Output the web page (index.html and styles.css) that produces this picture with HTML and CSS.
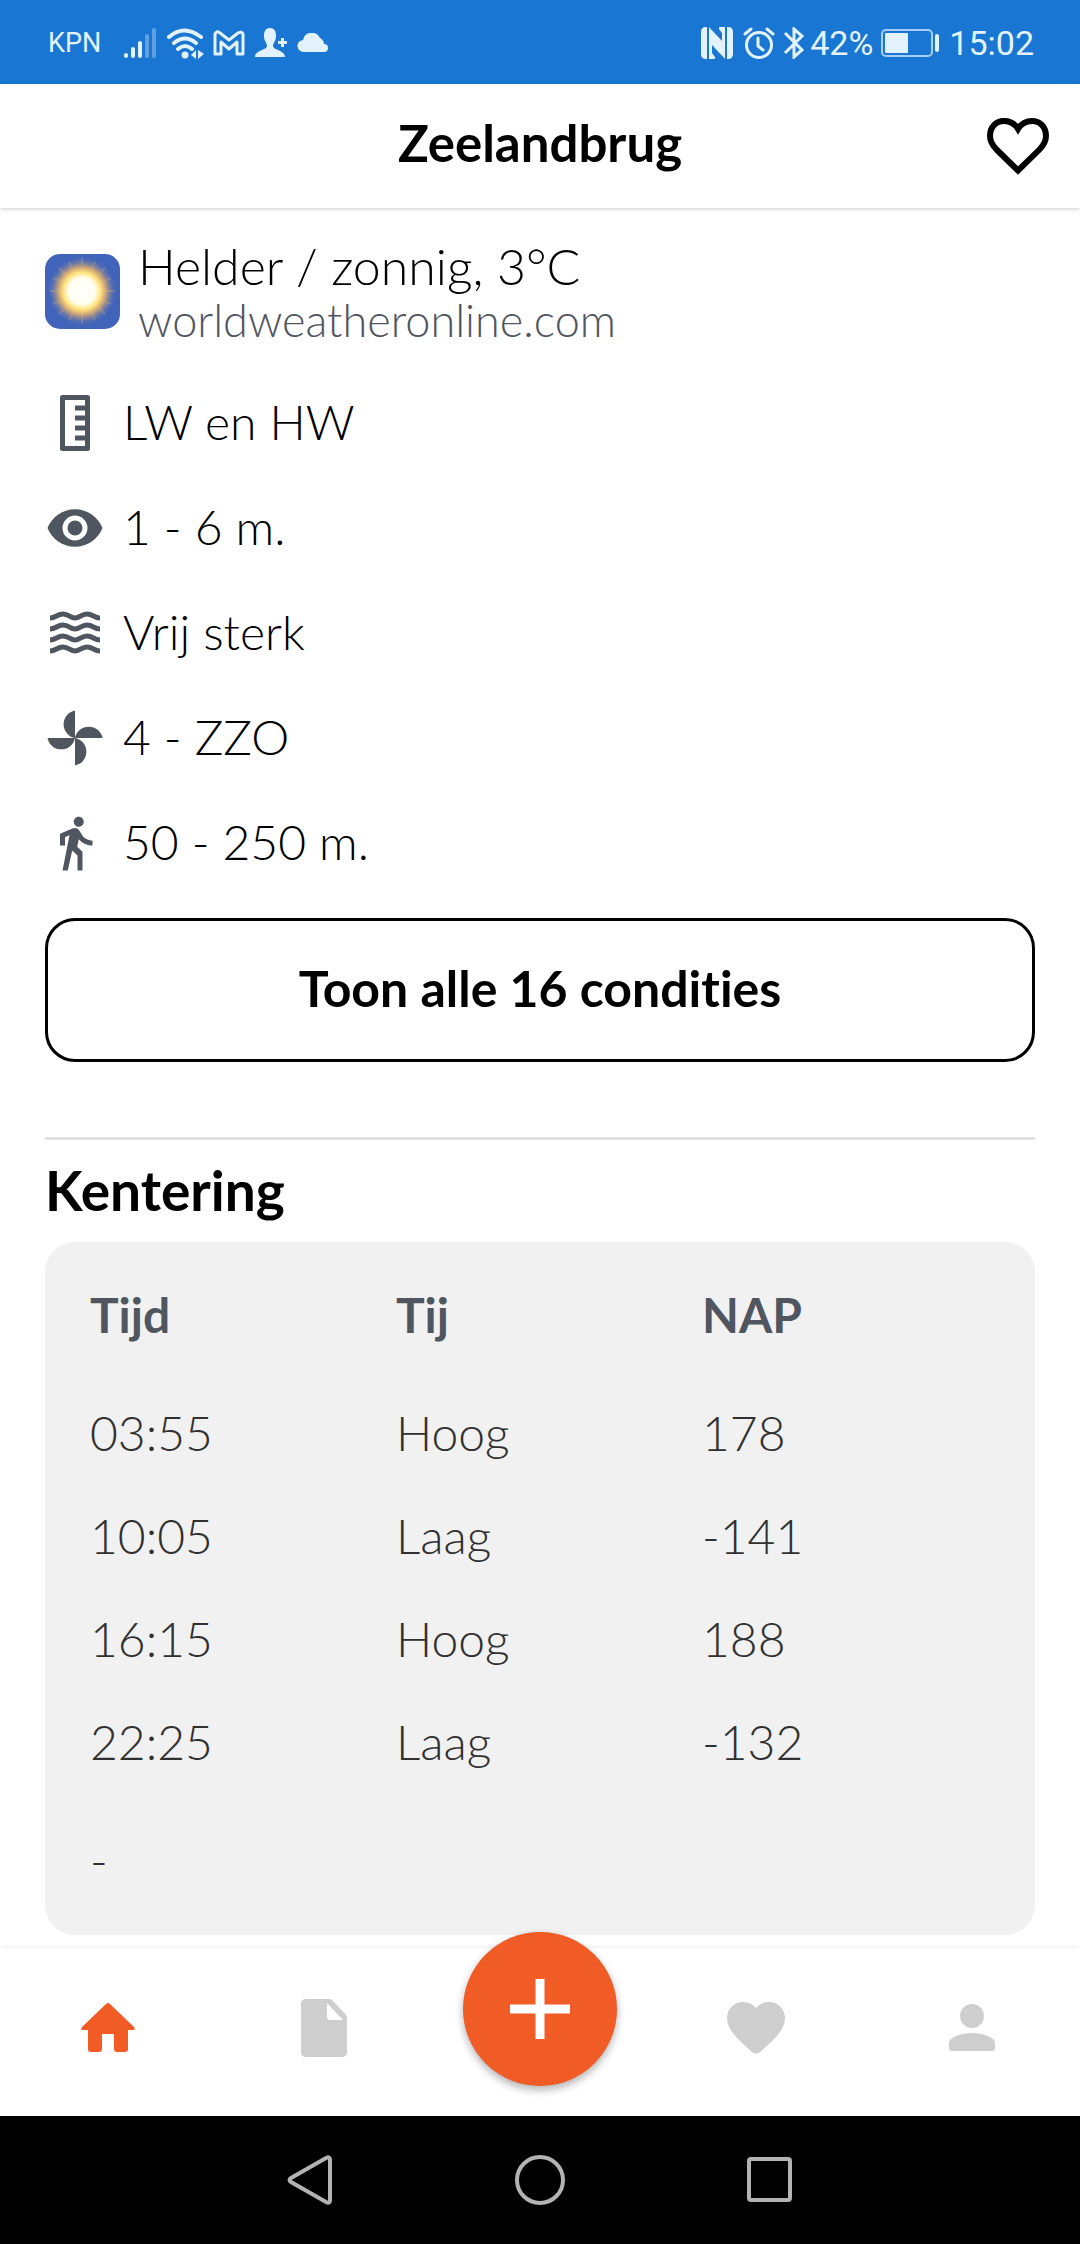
FILE: index.html
```html
<!DOCTYPE html>
<html lang="nl">
<head>
<meta charset="utf-8">
<meta name="viewport" content="width=device-width, initial-scale=1">
<title>Zeelandbrug</title>
<link rel="stylesheet" href="styles.css">
</head>
<body>
<div class="screen">
  <div class="status">
    <div class="status-left">
      <span class="carrier">KPN</span>
      <svg class="signal" width="34" height="32" viewBox="0 0 34 32"><g stroke="currentColor" stroke-width="4" stroke-linecap="round"><path d="M3 28v1M10 22v7M17 16v13"/><path opacity=".35" d="M24 9v20M31 3v26"/></g></svg>
      <svg class="wifi" width="38" height="32" viewBox="0 0 38 32"><g fill="none" stroke="currentColor" stroke-width="4" stroke-linecap="round"><path d="M3 10q15-13 32 0M8 16q11-9 22 0M12 22q7-6 14 0"/></g><circle cx="19" cy="28" r="3.500" fill="currentColor"/><path fill="currentColor" d="M30 23v9l-5-4zM32 23v9l6-5z"/></svg>
      <svg class="mail" width="32" height="26" viewBox="0 0 32 26"><path fill="none" stroke="currentColor" stroke-width="3" stroke-linejoin="round" d="M2 24V4q2-4 5-1l9 7 9-7q4-2 5 1v20h-6V12l-8 7-8-7v12z"/></svg>
      <svg class="contact" width="34" height="32" viewBox="0 0 34 32"><path fill="currentColor" d="M16 1c5 0 6 4 6 8 0 5-3 7-3 10 0 4 12 4 12 11H1c0-7 12-7 12-11 0-3-3-5-3-10 0-4 1-8 6-8zM27 11h3v3h3v3h-3v3h-3v-3h-3v-3h3z"/></svg>
      <svg class="cloud" width="32" height="20" viewBox="0 0 32 20"><path fill="currentColor" d="M7 19a6 6 0 0 1-1-12A9 9 0 0 1 23 5a7 7 0 0 1 4 6 4 4 0 0 1 0 8z"/></svg>
    </div>
    <div class="status-right">
      <svg class="nfc" width="32" height="32" viewBox="0 0 32 32"><path fill="currentColor" d="M5 0h1v32H5q-5 0-5-5V5q0-5 5-5zM27 32h-1V0h1q5 0 5 5v22q0 5-5 5zM8 0l13 14V6l-3-4V0h6v32L11 18v8l3 4v2H8z"/></svg>
      <svg class="alarm" width="32" height="32" viewBox="0 0 32 32"><g fill="none" stroke="currentColor" stroke-width="3" stroke-linecap="round"><circle cx="16" cy="18" r="12.500"/><path d="M15 11v8l5 4M2 7l6-5M30 7l-6-5"/></g></svg>
      <svg class="bluetooth" width="22" height="32" viewBox="0 0 22 32"><path fill="none" stroke="currentColor" stroke-width="3" d="M2 6l17 17-8 7V2l8 7L2 26"/></svg>
      <span class="clock">42%</span>
      <svg class="battery" width="60" height="28" viewBox="0 0 60 28"><rect x="1" y="1" width="50" height="26" rx="4" fill="none" stroke="currentColor" stroke-width="2" opacity=".7"/><rect x="4" y="4" width="23" height="20" rx="1" fill="currentColor"/><rect x="54" y="5" width="4" height="18" rx="2" fill="currentColor"/></svg>
      <span class="clock">15:02</span>
    </div>
  </div>

  <header class="topbar">
    <h1 class="topbar-title">Zeelandbrug</h1>
    <button class="favorite" type="button" aria-label="Favoriet">
      <svg width="64" height="60" viewBox="0 0 64 60"><path fill="none" stroke="currentColor" stroke-width="6" d="M32 54.500 11 34C6 29 4 25 4 20 4 11 10 5 18 5c6 0 11 3 14 8 3-5 8-8 14-8 8 0 14 6 14 15 0 5-2 9-7 14z"/></svg>
    </button>
  </header>

  <main class="content">
    <section class="weather">
      <svg class="weather-icon" width="75" height="75" viewBox="0 0 75 75" role="img" aria-label="Zonnig">
        <defs>
          <radialGradient id="sun"><stop offset="0" stop-color="#fff"/><stop offset=".38" stop-color="#fffef0"/><stop offset=".54" stop-color="#ffe27a"/><stop offset=".68" stop-color="#e5b06c" stop-opacity=".85"/><stop offset="1" stop-color="#4466b8" stop-opacity="0"/></radialGradient>
        </defs>
        <rect width="75" height="75" fill="#4064bb"/>
        <g stroke="#b9a58f" stroke-width="2" opacity=".45"><path d="M37 4v66M5 37h65M14 14l46 46M60 14L14 60M24 8l26 58M50 8L24 66M8 24l58 26M8 50l58-26"/></g>
        <circle cx="37" cy="37" r="35" fill="url(#sun)"/>
      </svg>
      <div>
        <p class="weather-text">Helder / zonnig, 3°C</p>
        <p class="weather-source">worldweatheronline.com</p>
      </div>
    </section>

    <ul class="conditions">
      <li class="condition">
        <svg class="icon" viewBox="0 0 60 60"><path fill="none" stroke="currentColor" stroke-width="5" stroke-linejoin="round" d="M17.500 4.500h25v51h-25z"/><path stroke="currentColor" stroke-width="5" d="M30 15h12M30 25h12M30 35h12M30 45h12"/></svg>
        <span class="condition-text">LW en HW</span>
      </li>
      <li class="condition">
        <svg class="icon" viewBox="0 0 24 24"><path fill="currentColor" d="M12 9a3 3 0 1 0 0 6 3 3 0 0 0 0-6m0 8a5 5 0 1 1 0-10 5 5 0 0 1 0 10m0-12.500C7 4.500 2.730 7.610 1 12c1.730 4.390 6 7.500 11 7.500s9.270-3.110 11-7.500c-1.730-4.390-6-7.500-11-7.500z"/></svg>
        <span class="condition-text">1 - 6 m.</span>
      </li>
      <li class="condition">
        <svg class="icon" viewBox="0 0 60 60"><g fill="none" stroke="currentColor" stroke-width="5"><path id="wave" d="M5 15c6 0 7-4 13-4s7 4 12 4 6-4 12-4 7 4 13 4"/><use href="#wave" y="11"/><use href="#wave" y="22"/><use href="#wave" y="33"/></g></svg>
        <span class="condition-text">Vrij sterk</span>
      </li>
      <li class="condition">
        <svg class="icon" viewBox="0 0 60 60"><path fill="currentColor" d="M30 30a14 14 0 0 1 0-27.500zM30 30a14 14 0 0 1 27.500 0zM30 30a14 14 0 0 1 0 27.500zM30 30a14 14 0 0 1-27.500 0z"/></svg>
        <span class="condition-text">4 - ZZO</span>
      </li>
      <li class="condition">
        <svg class="icon" viewBox="0 0 24 24"><path fill="currentColor" d="M13.500 5.500c1.100 0 2-.9 2-2s-.9-2-2-2-2 .9-2 2 .9 2 2 2zM9.800 8.900 7 23h2.100l1.800-8 2.100 2v6h2v-7.500l-2.100-2 .6-3C14.800 12 16.800 13 19 13v-2c-1.900 0-3.500-1-4.300-2.400l-1-1.600c-.4-.6-1-1-1.700-1-.3 0-.5.100-.8.100L6 8.300V13h2V9.600l1.800-.7"/></svg>
        <span class="condition-text">50 - 250 m.</span>
      </li>
    </ul>

    <button class="show-all" type="button">Toon alle 16 condities</button>

    <section class="tide">
      <h2 class="tide-title">Kentering</h2>
      <div class="tide-card">
        <table class="tide-table">
          <thead><tr><th scope="col">Tijd</th><th scope="col">Tij</th><th scope="col">NAP</th></tr></thead>
          <tbody>
            <tr><td>03:55</td><td>Hoog</td><td>178</td></tr>
            <tr><td>10:05</td><td>Laag</td><td>-141</td></tr>
            <tr><td>16:15</td><td>Hoog</td><td>188</td></tr>
            <tr><td>22:25</td><td>Laag</td><td>-132</td></tr>
          </tbody>
        </table>
        <p class="tide-note">-</p>
      </div>
    </section>
  </main>

  <nav class="tabs">
    <a class="tab tab-active" href="#home" aria-label="Home"><svg width="60" height="60" viewBox="0 0 60 60"><path fill="currentColor" d="M28 6q2-2 4 0l24 23q2 3-1 3h-5v19q0 3-3 3h-8q-3 0-3-3V36H24v15q0 3-3 3h-8q-3 0-3-3V32H5q-3 0-1-3z"/></svg></a>
    <a class="tab" href="#logboek" aria-label="Logboek"><svg width="60" height="60" viewBox="0 0 60 60"><path fill="currentColor" fill-rule="evenodd" d="M12 1h23q2 0 3 1l14 15q1 1 1 3v34q0 5-5 5H12q-5 0-5-5V6q0-5 5-5zM33 5v14q0 3 3 3h13z"/></svg></a>
    <a class="fab" href="#nieuw" aria-label="Nieuw"><svg width="60" height="60" viewBox="0 0 60 60"><path fill="none" stroke="currentColor" stroke-width="9" d="M30 0v60M0 30h60"/></svg></a>
    <a class="tab" href="#favorieten" aria-label="Favorieten"><svg width="60" height="60" viewBox="0 0 60 60"><path fill="currentColor" d="M34 54q-4 3-8 0C14 43 1 33 1 20 1 11 8 4 17 4q8 0 13 6 5-6 13-6c9 0 16 7 16 16 0 13-13 23-25 34z"/></svg></a>
    <a class="tab" href="#profiel" aria-label="Profiel"><svg width="60" height="60" viewBox="0 0 60 60"><path fill="currentColor" d="M30 6a12 12 0 1 1 0 24 12 12 0 0 1 0-24zM7 45c0-6 13-10 23-10s23 4 23 10v5q0 3-3 3H10q-3 0-3-3z"/></svg></a>
  </nav>

  <div class="system-nav">
    <button class="system-key" type="button" aria-label="Terug"><svg width="52" height="52" viewBox="0 0 52 52"><path d="M7 24 42 4q4-2 4 2v40q0 4-4 2L7 28q-3-2 0-4z"/></svg></button>
    <button class="system-key" type="button" aria-label="Start"><svg width="52" height="52" viewBox="0 0 52 52"><circle cx="26" cy="26" r="23"/></svg></button>
    <button class="system-key" type="button" aria-label="Recent"><svg width="52" height="52" viewBox="0 0 52 52"><rect x="5" y="5" width="41" height="41" rx="2"/></svg></button>
  </div>
</div>
</body>
</html>
```
FILE: styles.css
```css
* {
  box-sizing: border-box;
  margin: 0;
  padding: 0;
}

body {
  background: #fff;
  color: #000;
  font-family: Lato, "Open Sans", sans-serif;
  font-size: 48px;
  font-weight: 300;
  font-variant-ligatures: none;
}

button {
  border: 0;
  background: none;
  color: inherit;
  font: inherit;
}

svg {
  display: block;
  flex: none;
}

.screen {
  display: flex;
  flex-direction: column;
  min-height: 100vh;
}

/* Status bar */
.status {
  display: flex;
  justify-content: space-between;
  align-items: center;
  height: 84px;
  padding: 2px 46px 0 48px;
  background: #1976d2;
  color: #e2f3ff;
  font-family: Roboto, sans-serif;
  font-weight: 400;
}

.status-left,
.status-right {
  display: flex;
  align-items: center;
}

.status-left {
  gap: 9px;
}

.status-right {
  gap: 8px;
}

.carrier {
  width: 66px;
  font-size: 27px;
}

.nfc {
  margin-right: 2px;
}

.bluetooth {
  margin-right: -3px;
}

.clock {
  font-size: 34px;
}

/* Page header */
.topbar {
  display: grid;
  grid-template-columns: 1fr auto 1fr;
  align-items: center;
  height: 124px;
  padding: 0 30px;
  box-shadow: 0 1px 4px rgba(0, 0, 0, 0.2);
}

.topbar-title {
  grid-column: 2;
  padding-bottom: 8px;
  font-size: 51px;
  font-weight: 700;
}

.favorite {
  justify-self: end;
}

/* Page content */
.content {
  flex: 1;
  padding: 31px 45px 13px;
}

.weather {
  display: flex;
  align-items: center;
  gap: 18px;
}

.weather-icon {
  margin-bottom: 4px;
  border-radius: 15px;
}

.weather-text,
.weather-source {
  line-height: 54px;
}

.weather-text {
  font-size: 50px;
}

.weather-source {
  color: #50565f;
  font-size: 45px;
}

.conditions {
  margin: 23px 0;
  list-style: none;
}

.condition {
  display: flex;
  align-items: center;
  gap: 18px;
  height: 105px;
}

.icon {
  width: 60px;
  height: 60px;
  color: #50565f;
}

.condition-text {
  padding-bottom: 2px;
}

.show-all {
  width: 100%;
  height: 144px;
  padding-bottom: 4px;
  border: 3px solid #000;
  border-radius: 30px;
  font-size: 50px;
  font-weight: 700;
}

/* Tide table */
.tide {
  margin-top: 75px;
  padding-top: 16px;
  border-top: 3px solid #e2e2e2;
}

.tide-title {
  font-size: 55px;
  font-weight: 700;
  line-height: 68px;
}

.tide-card {
  margin-top: 18px;
  padding: 21px 45px 24px;
  border-radius: 30px;
  background: #f1f1f1;
  color: #303030;
}

.tide-table {
  width: 100%;
  border-collapse: collapse;
  table-layout: fixed;
}

.tide-table th,
.tide-table td {
  height: 103px;
  text-align: left;
}

.tide-table th {
  height: 118px;
  padding-bottom: 15px;
  color: #50565f;
  font-weight: 700;
}

.tide-table th:nth-child(-n + 2) {
  width: 34%;
}

.tide-note {
  margin-top: 15px;
  line-height: 103px;
}

/* Bottom tabs */
.tabs {
  display: grid;
  grid-template-columns: repeat(5, 1fr);
  grid-template-rows: 168px;
  align-items: center;
  justify-items: center;
  background: #fff;
  box-shadow: 0 -1px 4px rgba(0, 0, 0, 0.08);
}

.tab {
  margin-bottom: 8px;
  color: #cecece;
}

.tab-active {
  color: #f05b26;
}

.fab {
  display: flex;
  align-items: center;
  justify-content: center;
  width: 154px;
  height: 154px;
  margin-bottom: 46px;
  border-radius: 50%;
  background: #f05b26;
  box-shadow: 0 4px 8px rgba(0, 0, 0, 0.3);
  color: #fff;
}

/* Android navigation keys */
.system-nav {
  display: flex;
  align-items: center;
  justify-content: center;
  gap: 178px;
  height: 128px;
  background: #000;
}

.system-key svg {
  fill: none;
  stroke: #b3b3b3;
  stroke-width: 4px;
}
```
